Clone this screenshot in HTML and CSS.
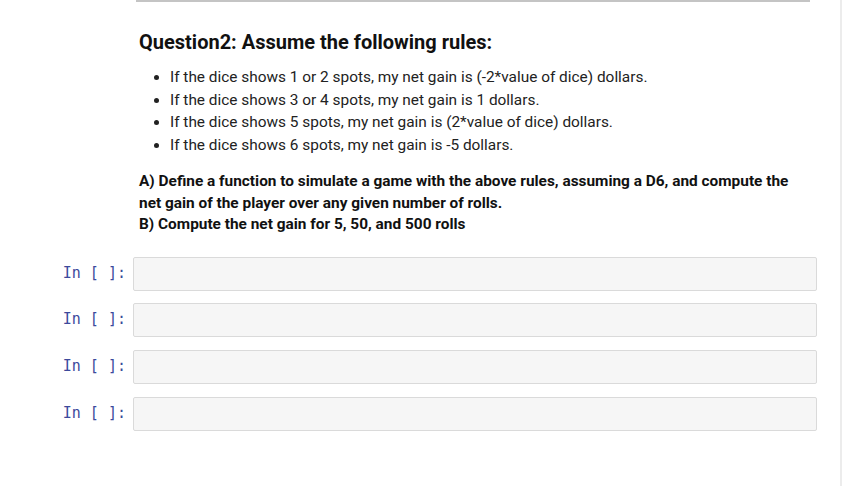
FILE: index.html
```html
<!DOCTYPE html>
<html>
<head>
<meta charset="utf-8">
<link rel="stylesheet" href="styles.css">
</head>
<body>
<div class="page">
  <div class="topline"></div>
  <div class="md">
    <h2 class="title">Question2: Assume the following rules:</h2>
    <ul class="rules">
      <li>If the dice shows 1 or 2 spots, my net gain is (-2*value of dice) dollars.</li>
      <li>If the dice shows 3 or 4 spots, my net gain is 1 dollars.</li>
      <li>If the dice shows 5 spots, my net gain is (2*value of dice) dollars.</li>
      <li>If the dice shows 6 spots, my net gain is -5 dollars.</li>
    </ul>
    <p class="task">A) Define a function to simulate a game with the above rules, assuming a D6, and compute the net gain of the player over any given number of rolls.<br>B) Compute the net gain for 5, 50, and 500 rolls</p>
  </div>
  <div class="cells">
    <div class="cell"><div class="prompt">In&nbsp;[&nbsp;]:</div><div class="input"></div></div>
    <div class="cell"><div class="prompt">In&nbsp;[&nbsp;]:</div><div class="input"></div></div>
    <div class="cell"><div class="prompt">In&nbsp;[&nbsp;]:</div><div class="input"></div></div>
    <div class="cell"><div class="prompt">In&nbsp;[&nbsp;]:</div><div class="input"></div></div>
  </div>
</div>
</body>
</html>
```
FILE: styles.css
```css
html, body {
  margin: 0;
  padding: 0;
  background: #fff;
}
body {
  width: 842px;
  height: 486px;
  overflow: hidden;
  font-family: Roboto, "Liberation Sans", sans-serif;
  color: #000;
}
.page {
  height: 486px;
  border-right: 2px solid #ececec;
  box-sizing: border-box;
}
.topline {
  margin-left: 136px;
  width: 674px;
  height: 2px;
  background: #c4c4c4;
}
.md {
  padding-left: 139px;
}
.title {
  margin: 27px 0 0 0;
  font-size: 20px;
  font-weight: 700;
  line-height: 26px;
  color: #111;
}
.rules {
  margin: 11px 0 0 0;
  padding-left: 31px;
  font-size: 15.4px;
  line-height: 22.5px;
  color: #222;
}
.task {
  margin: 15px 0 0 0;
  font-size: 15.4px;
  font-weight: 700;
  line-height: 21.5px;
  color: #111;
  width: 665px;
}
.cells {
  margin-top: 21px;
  display: flex;
  flex-direction: column;
  gap: 12.7px;
}
.cell {
  display: flex;
  align-items: flex-start;
}
.prompt {
  width: 133px;
  box-sizing: border-box;
  padding: 7px 7px 0 0;
  text-align: right;
  font-family: "DejaVu Sans Mono", monospace;
  font-size: 15px;
  line-height: 18px;
  color: #3c4a9c;
}
.input {
  width: 684px;
  height: 34px;
  box-sizing: border-box;
  border: 1px solid #dadada;
  border-radius: 2px;
  background: #f6f6f6;
}
```
